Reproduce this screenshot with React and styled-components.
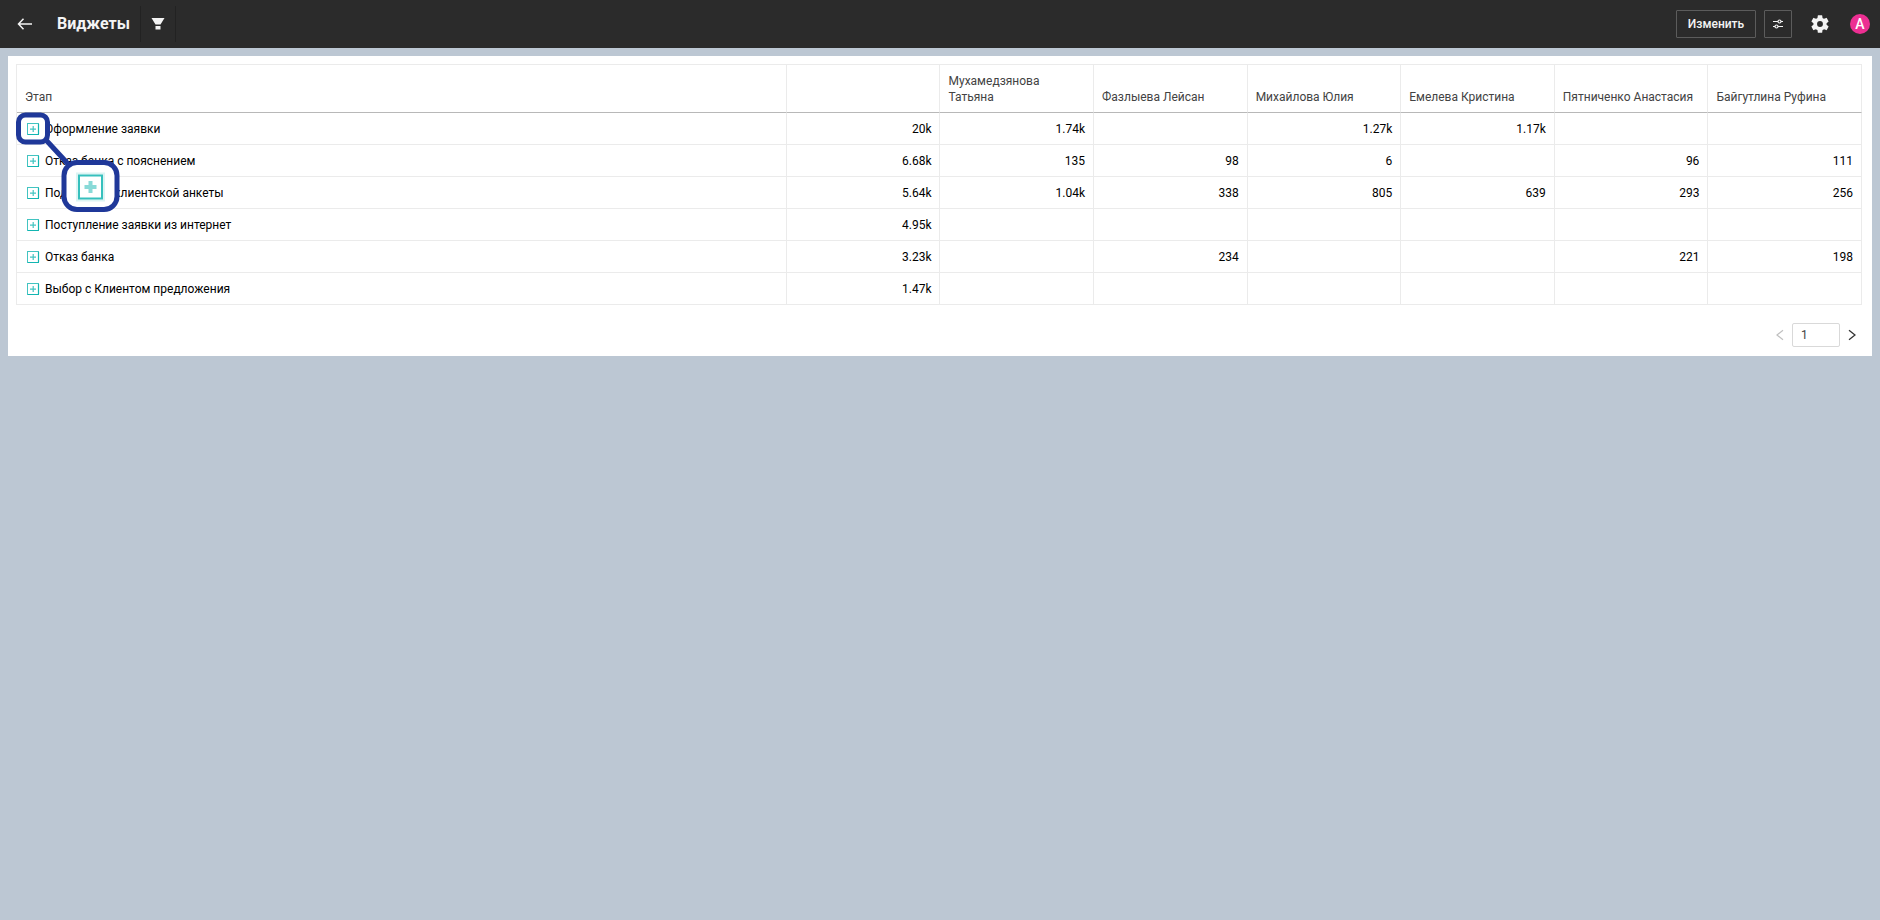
import React from "react";
import styled, { createGlobalStyle } from "styled-components";

const GlobalStyle = createGlobalStyle`
  *, *::before, *::after { box-sizing: border-box; }
  body {
    margin: 0;
    min-height: 100vh;
    background: #bcc7d3;
    color: #000;
    font: 12px/16px Roboto, "Liberation Sans", sans-serif;
  }
  button, input { font: inherit; color: inherit; }
`;

const TopBar = styled.header`
  display: flex;
  align-items: center;
  height: 48px;
  padding: 0 10px 0 13px;
  background: #2b2b2b;
  color: #f4f4f4;
`;

const IconButton = styled.button`
  display: flex;
  align-items: center;
  justify-content: center;
  width: ${(p) => p.$width || 24}px;
  height: ${(p) => p.$height || 24}px;
  padding: 0;
  border: 0;
  background: none;
  color: inherit;
  cursor: pointer;
`;

const Title = styled.h1`
  margin: 0 10px 0 20px;
  font-size: 16px;
  line-height: 24px;
  font-weight: 700;
`;

const FilterSlot = styled.div`
  height: 36px;
  border: solid #222;
  border-width: 0 1px;
  display: flex;
  align-items: center;
`;

const Actions = styled.div`
  display: flex;
  align-items: center;
  gap: 8px;
  margin-left: auto;
`;

const OutlineButton = styled.button`
  display: flex;
  align-items: center;
  justify-content: center;
  width: ${(p) => p.$width}px;
  height: 28px;
  padding: 0;
  border: 1px solid #5c5c5c;
  border-radius: 1px;
  background: none;
  color: inherit;
  font-weight: 500;
  cursor: pointer;
`;

const Gear = styled(IconButton)`
  margin: 0 10px 0 8px;
`;

const Avatar = styled.button`
  width: 20px;
  height: 20px;
  padding: 0;
  border: 0;
  border-radius: 50%;
  background: #ec2f92;
  color: #fff;
  font-size: 14px;
  line-height: 20px;
  font-weight: 500;
  text-align: center;
`;

const Card = styled.main`
  position: relative;
  margin: 8px;
  padding: 8px 8px 9px;
  background: #fff;
`;

const TableArea = styled.div`
  padding-right: 2px;
`;

const Table = styled.table`
  width: 100%;
  table-layout: fixed;
  border-collapse: separate;
  border-spacing: 0;
  border: solid #ebebeb;
  border-width: 1px 0 0 1px;
`;

const StageCol = styled.col`
  width: 41.73%;
`;

const HeadCell = styled.th`
  height: 48px;
  padding: 7px 8px;
  border: solid #ebebeb;
  border-width: 0 1px 1px 0;
  border-bottom-color: #b8b8b8;
  color: #434343;
  font-weight: 400;
  text-align: left;
  vertical-align: bottom;
`;

const StageCell = styled.th`
  height: 32px;
  padding: 0 8px;
  border: solid #ebebeb;
  border-width: 0 1px 1px 0;
  font-weight: 400;
  text-align: left;
`;

const Stage = styled.div`
  display: flex;
  align-items: center;
  gap: 4px;
`;

const NumberCell = styled.td`
  height: 32px;
  padding: 0 8px;
  border: solid #ebebeb;
  border-width: 0 1px 1px 0;
  text-align: right;
`;

const Pager = styled.nav`
  display: flex;
  align-items: center;
  justify-content: flex-end;
  margin-top: 18px;
`;

const PageInput = styled.input`
  width: 48px;
  height: 24px;
  padding: 0 8px;
  border: 1px solid #d9d9d9;
  border-radius: 2px;
  background: #fff;
  color: #434343;
`;

const Callout = styled.svg`
  position: absolute;
  left: 8px;
  top: 56px;
  pointer-events: none;
`;

const people = [
  "",
  "Мухамедзянова Татьяна",
  "Фазлыева Лейсан",
  "Михайлова Юлия",
  "Емелева Кристина",
  "Пятниченко Анастасия",
  "Байгутлина Руфина",
];

const rows = [
  ["Оформление заявки", "20k", "1.74k", "", "1.27k", "1.17k", "", ""],
  ["Отказ банка с пояснением", "6.68k", "135", "98", "6", "", "96", "111"],
  ["Подготовка клиентской анкеты", "5.64k", "1.04k", "338", "805", "639", "293", "256"],
  ["Поступление заявки из интернет", "4.95k", "", "", "", "", "", ""],
  ["Отказ банка", "3.23k", "", "234", "", "", "221", "198"],
  ["Выбор с Клиентом предложения", "1.47k", "", "", "", "", "", ""],
];

const PlusBox = () => (
  <svg width="16" height="16" viewBox="0 0 16 16" fill="none" stroke="#13b5b1" aria-hidden="true">
    <path d="M2 2.5H14M2.5 3V14" strokeOpacity=".8" />
    <path d="M3 13.5H14M13.5 3V13" strokeWidth="1.2" />
    <path d="M5 8.2H11M8.200 5V11" strokeOpacity=".8" strokeWidth="1.2" />
  </svg>
);

export default function App() {
  return (
    <>
      <GlobalStyle />
      <TopBar>
        <IconButton aria-label="Назад">
          <svg width="16" height="12" viewBox="0 0 16 12" fill="none" stroke="currentColor" strokeWidth="1.5">
            <path d="M6.5 .8L1.5 6L6.5 11.2M1.5 6H15" />
          </svg>
        </IconButton>
        <Title>Виджеты</Title>
        <FilterSlot>
          <IconButton $width={34} aria-label="Фильтр">
            <svg width="14" height="12" viewBox="0 0 14 12" fill="currentColor">
              <path d="M.5 0H13.5L9.5 6.5H4.5ZM4.5 8H9.5V11.5H4.5Z" />
            </svg>
          </IconButton>
        </FilterSlot>
        <Actions>
          <OutlineButton $width={80}>Изменить</OutlineButton>
          <OutlineButton $width={28} aria-label="Параметры">
            <svg width="12" height="10" viewBox="0 0 12 10" fill="none" stroke="currentColor" strokeWidth="1.2">
              <path d="M1 2.5H6M9 2.5H11M1 7.5H3M6 7.5H11" />
              <circle cx="7.5" cy="2.5" r="1.5" />
              <circle cx="4.5" cy="7.5" r="1.5" />
            </svg>
          </OutlineButton>
          <Gear aria-label="Настройки">
            <svg width="22" height="22" viewBox="0 0 24 24" fill="currentColor">
              <path d="M19.14 12.94c.04-.3.06-.61.06-.94 0-.32-.02-.64-.07-.94l2.03-1.58a.49.49 0 0 0 .12-.61l-1.92-3.32a.49.49 0 0 0-.59-.22l-2.39.96c-.5-.38-1.03-.7-1.62-.94l-.36-2.54a.48.48 0 0 0-.48-.41h-3.84a.48.48 0 0 0-.47.41l-.36 2.54c-.59.24-1.13.57-1.62.94l-2.39-.96a.48.48 0 0 0-.59.22L2.74 8.87a.48.48 0 0 0 .12.61l2.03 1.58c-.05.3-.09.63-.09.94s.02.64.07.94l-2.03 1.58a.49.49 0 0 0-.12.61l1.92 3.32c.12.22.37.29.59.22l2.39-.96c.5.38 1.03.7 1.62.94l.36 2.54c.05.24.24.41.48.41h3.84c.24 0 .44-.17.47-.41l.36-2.54c.59-.24 1.13-.56 1.62-.94l2.39.96c.22.08.47 0 .59-.22l1.92-3.32a.48.48 0 0 0-.12-.61zM12 15.2A3.2 3.2 0 1 1 12 8.8a3.2 3.2 0 0 1 0 6.4z" />
            </svg>
          </Gear>
          <Avatar aria-label="Профиль A">A</Avatar>
        </Actions>
      </TopBar>
      <Card>
        <TableArea>
          <Table>
            <colgroup>
              <StageCol />
              {people.map((_, i) => <col key={i} />)}
            </colgroup>
            <thead>
              <tr>
                <HeadCell scope="col">Этап</HeadCell>
                {people.map((name, i) => <HeadCell scope="col" key={i}>{name}</HeadCell>)}
              </tr>
            </thead>
            <tbody>
              {rows.map(([stage, ...values]) => (
                <tr key={stage}>
                  <StageCell scope="row">
                    <Stage>
                      <IconButton $width={16} $height={16} aria-label={`Развернуть: ${stage}`}>
                        <PlusBox />
                      </IconButton>
                      {stage}
                    </Stage>
                  </StageCell>
                  {values.map((v, i) => <NumberCell key={i}>{v}</NumberCell>)}
                </tr>
              ))}
            </tbody>
          </Table>
        </TableArea>
        <Pager aria-label="Страницы">
          <IconButton disabled aria-label="Предыдущая страница">
            <svg width="8" height="12" viewBox="0 0 8 12" fill="none" stroke="#bfbfbf" strokeWidth="1.2">
              <path d="M7 1.2L1 6L7 10.8" />
            </svg>
          </IconButton>
          <PageInput aria-label="Номер страницы" defaultValue="1" />
          <IconButton aria-label="Следующая страница">
            <svg width="8" height="12" viewBox="0 0 8 12" fill="none" stroke="#333" strokeWidth="1.3">
              <path d="M1 1.2L7 6L1 10.8" />
            </svg>
          </IconButton>
        </Pager>
        <Callout width="106" height="102" viewBox="0 0 106 102" fill="none" aria-hidden="true">
          <path d="M30 28L54 54" stroke="#1f3899" strokeWidth="5" />
          <rect x="2.5" y="3" width="29" height="27" rx="7" stroke="#1f3899" strokeWidth="5" />
          <rect x="48" y="50.5" width="53" height="47" rx="13" fill="#fff" stroke="#1f3899" strokeWidth="5" />
          <rect x="61" y="61.5" width="27" height="27" stroke="#13b5b1" strokeOpacity=".15" strokeWidth="2" />
          <rect x="63" y="63.5" width="23" height="23" stroke="#13b5b1" strokeOpacity=".85" strokeWidth="2" />
          <path d="M68.5 75H80.5M74.5 69V81" stroke="#13b5b1" strokeOpacity=".5" strokeWidth="4" />
        </Callout>
      </Card>
    </>
  );
}
